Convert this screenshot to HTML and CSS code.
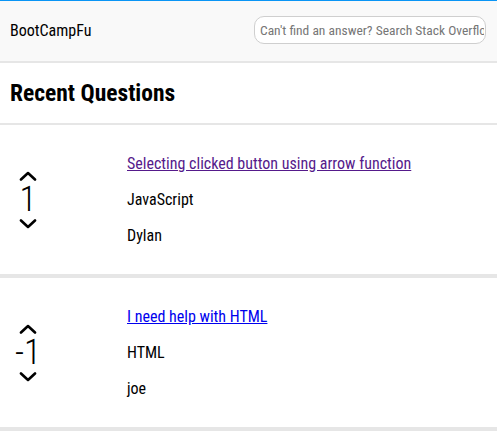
FILE: index.html
```html
<!DOCTYPE html>
<html>
<head>
<meta charset="utf-8">
<link rel="stylesheet" href="styles.css">
</head>
<body>
<header class="topbar">
  <div class="brand">BootCampFu</div>
  <input class="search" type="text" placeholder="Can't find an answer? Search Stack Overflow">
</header>
<main>
  <h1 class="title">Recent Questions</h1>
  <section class="card">
    <div class="votes">
      <svg class="chev" viewBox="0 0 18 10" width="18" height="10"><path d="M2 8.5 L9 2 L16 8.5" fill="none" stroke="#000" stroke-width="2.6" stroke-linecap="round" stroke-linejoin="round"/></svg>
      <div class="count">1</div>
      <svg class="chev" viewBox="0 0 18 10" width="18" height="10"><path d="M2 1.5 L9 8 L16 1.5" fill="none" stroke="#000" stroke-width="2.6" stroke-linecap="round" stroke-linejoin="round"/></svg>
    </div>
    <div class="info">
      <p><a class="visited" href="#">Selecting clicked button using arrow function</a></p>
      <p>JavaScript</p>
      <p>Dylan</p>
    </div>
  </section>
  <section class="card">
    <div class="votes">
      <svg class="chev" viewBox="0 0 18 10" width="18" height="10"><path d="M2 8.5 L9 2 L16 8.5" fill="none" stroke="#000" stroke-width="2.6" stroke-linecap="round" stroke-linejoin="round"/></svg>
      <div class="count">-1</div>
      <svg class="chev" viewBox="0 0 18 10" width="18" height="10"><path d="M2 1.5 L9 8 L16 1.5" fill="none" stroke="#000" stroke-width="2.6" stroke-linecap="round" stroke-linejoin="round"/></svg>
    </div>
    <div class="info">
      <p><a class="link" href="#">I need help with HTML</a></p>
      <p>HTML</p>
      <p>joe</p>
    </div>
  </section>
</main>
</body>
</html>
```
FILE: styles.css
```css
* { box-sizing: border-box; }
html, body { margin: 0; padding: 0; background: #fff; }
body {
  font-family: "Roboto Condensed", "Liberation Sans Narrow", Roboto, sans-serif;
  font-stretch: condensed;
  font-size: 16px;
  color: #000;
  border-top: 1px solid #0a95f5;
}
.topbar {
  display: flex;
  align-items: center;
  justify-content: space-between;
  height: 62px;
  padding: 0 11px 2px 10px;
  background: #f9f9f9;
  border-bottom: 2px solid #e6e6e6;
}
.brand { font-size: 16px; }
.search {
  width: 232px;
  height: 28px;
  border: 1px solid #cfcfcf;
  border-radius: 10px;
  padding: 0 1px 0 5px;
  font-family: inherit;
  font-stretch: condensed;
  font-size: 13.5px;
  background: #fff;
}
.search::placeholder { color: #767676; }
.title {
  margin: 0;
  height: 62px;
  display: flex;
  align-items: center;
  padding: 0 10px;
  font-size: 23.5px;
  font-weight: 700;
  border-bottom: 2px solid #e6e6e6;
}
.card {
  display: flex;
  align-items: center;
  border-bottom: 4px solid #e6e6e6;
  height: 153px;
}
.votes {
  width: 36px;
  margin-left: 10px;
  display: flex;
  flex-direction: column;
  align-items: center;
}
.chev { display: block; }
.count {
  font-size: 35px;
  line-height: 38px;
  font-weight: 350;
}
.info { margin-left: 81px; }
.info p { margin: 16px 0; line-height: 20px; }
.visited { color: #551a8b; }
.link { color: #0000ee; }
```
